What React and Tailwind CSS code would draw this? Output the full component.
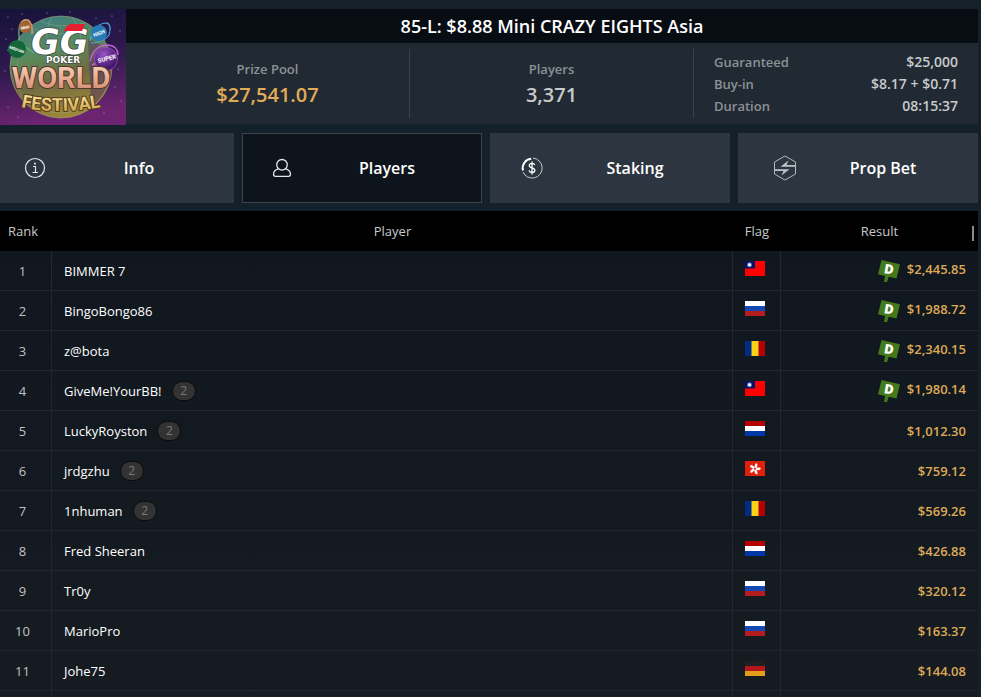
import React from "react";

const tabs = [
  { id: "info", label: "Info", Icon: InfoIcon, slot: "pl-7" },
  { id: "players", label: "Players", Icon: UserIcon, slot: "pl-[27px]" },
  { id: "staking", label: "Staking", Icon: StakingIcon, slot: "pl-[29px]" },
  { id: "prop-bet", label: "Prop Bet", Icon: PropBetIcon, slot: "pl-[34px]" },
];

const details = [
  { label: "Guaranteed", value: "$25,000" },
  { label: "Buy-in", value: "$8.17 + $0.71" },
  { label: "Duration", value: "08:15:37" },
];

const players = [
  { name: "BIMMER 7", flag: "tw", result: "$2,445.85", deal: true },
  { name: "BingoBongo86", flag: "ru", result: "$1,988.72", deal: true },
  { name: "z@bota", flag: "ro", result: "$2,340.15", deal: true },
  { name: "GiveMe!YourBB!", flag: "tw", result: "$1,980.14", deal: true, entries: 2 },
  { name: "LuckyRoyston", flag: "nl", result: "$1,012.30", entries: 2 },
  { name: "jrdgzhu", flag: "hk", result: "$759.12", entries: 2 },
  { name: "1nhuman", flag: "ro", result: "$569.26", entries: 2 },
  { name: "Fred Sheeran", flag: "nl", result: "$426.88" },
  { name: "Tr0y", flag: "ru", result: "$320.12" },
  { name: "MarioPro", flag: "ru", result: "$163.37" },
  { name: "Johe75", flag: "de", result: "$144.08" },
];

function InfoIcon() {
  return (
    <svg viewBox="0 0 24 24" className="w-6 h-6" fill="none" stroke="#e4e6e8" strokeWidth="1.2">
      <circle cx="12" cy="12" r="9.5" />
      <path d="M10 10.5h2.5v6M9.5 16.5h5.5" />
      <path d="M11 7.7h1.8" strokeWidth="1.8" />
    </svg>
  );
}

function UserIcon() {
  return (
    <svg viewBox="0 0 24 24" className="w-6 h-6" fill="none" stroke="#e4e6e8" strokeWidth="1.3">
      <circle cx="12" cy="8.8" r="5.3" />
      <path d="M8.3 12.8C5.2 13.8 3.5 15.5 3.5 18c0 1.600 .8 2.300 2 2.300h13c1.200 0 2-.7 2-2.300 0-2.500-1.700-4.200-4.800-5.200" />
    </svg>
  );
}

function StakingIcon() {
  return (
    <svg viewBox="0 0 24 24" className="w-6 h-6" fill="none" stroke="#d5d8db">
      <path d="M13 2.100a10 10 0 1 1-10 14" strokeWidth="0.9" />
      <path d="M11.200 2.800A9.300 9.300 0 0 0 3 14.500" stroke="#fff" strokeWidth="2" />
      <path
        d="M14.700 9.100c-.3-1.100-1.300-1.700-2.700-1.700-1.600 0-2.700.8-2.700 2.100 0 3.200 5.500 1.400 5.500 4.700 0 1.400-1.200 2.200-2.800 2.200s-2.700-.7-3-2M12 5.600v12.800"
        stroke="#fff"
        strokeWidth="1.300"
      />
    </svg>
  );
}

function PropBetIcon() {
  return (
    <svg viewBox="0 0 24 26" className="w-6 h-[26px]">
      <path d="M12 1 22.500 7v12L12 25 1.500 19V7z" fill="none" stroke="#b4b8bc" />
      <path d="M22.500 10v1.700H7.500L15.500 5.500 13.500 10z" fill="#c0c3c6" />
      <path d="M1.500 16v-1.700h15L8.500 20.500l2-4.500z" fill="#c0c3c6" />
    </svg>
  );
}

const stars = [
  [8, 8], [22, 5], [47, 4], [96, 9], [112, 7], [120, 22], [6, 30], [118, 60], [5, 62],
  [121, 92], [8, 98], [104, 104], [18, 108], [70, 3], [115, 78], [12, 20], [108, 14],
];

function EventLogo() {
  return (
    <svg viewBox="0 0 126 116" className="w-[126px] h-[116px] shrink-0" role="img" aria-label="GG Poker World Festival">
      <defs>
        <linearGradient id="sky" x1="0" y1="0" x2="0.200" y2="1">
          <stop offset="0" stopColor="#15133a" />
          <stop offset="0.550" stopColor="#311a50" />
          <stop offset="1" stopColor="#6c2470" />
        </linearGradient>
        <linearGradient id="globe" x1="0.300" y1="0" x2="0.600" y2="1">
          <stop offset="0" stopColor="#3d7d80" />
          <stop offset="0.350" stopColor="#5b8a5c" />
          <stop offset="0.600" stopColor="#6f6a42" />
          <stop offset="1" stopColor="#a08a38" />
        </linearGradient>
        <linearGradient id="rose" x1="0" y1="0" x2="0" y2="1">
          <stop offset="0" stopColor="#f9dcc4" />
          <stop offset="0.600" stopColor="#e2a58b" />
          <stop offset="1" stopColor="#c98268" />
        </linearGradient>
        <linearGradient id="gold" x1="0" y1="0" x2="0" y2="1">
          <stop offset="0" stopColor="#fff0b0" />
          <stop offset="1" stopColor="#cf9a3e" />
        </linearGradient>
        <radialGradient id="violet" cx="0.400" cy="0.300" r="0.700">
          <stop offset="0" stopColor="#9a55c4" />
          <stop offset="1" stopColor="#371060" />
        </radialGradient>
        <path id="curve" d="M21 98Q60 107 112 96" />
      </defs>
      <rect width="126" height="116" fill="url(#sky)" />
      {stars.map(([x, y]) => (
        <circle key={`${x}-${y}`} cx={x} cy={y} r="0.600" fill="#a9a3dc" />
      ))}
      <circle cx="61" cy="58" r="51" fill="url(#globe)" stroke="#a59a70" strokeWidth="0.600" />
      <path
        d="M40 12q20 9 45 2M34 20q26 10 56 0M52 8q-8 14-4 30M72 8q8 10 10 26M18 52q-4 20 4 36M40 100q20 8 42 0"
        stroke="#a0b898"
        strokeWidth="0.700"
        fill="none"
        opacity="0.500"
      />
      <path d="M88 30q20 4 23 34-6 24-20 34z" fill="#5a3c5c" opacity="0.600" />
      <path d="M8 42Q10 32 20 34L34 44M20 34Q16 12 26 11q6 2 7 14" fill="none" stroke="#60b57c" strokeWidth="1.300" />
      <path d="M20 20q1-11 8-9 5 3 4 14" fill="none" stroke="#d88b62" strokeWidth="1.600" />
      <path d="M90 52Q94 36 108 36q10 1 10 10M92 56l14-6" fill="none" stroke="#c264d8" strokeWidth="1.400" />
      <path d="M90 32q4-18 17-18 5 2 2 12-6 8-18 8" fill="none" stroke="#4ca7df" strokeWidth="1.200" />
      <circle cx="25" cy="18" r="6" fill="#a66332" />
      <circle cx="17" cy="40" r="9" fill="#136638" />
      <circle cx="99" cy="24" r="8" fill="#267bb4" />
      <circle cx="106" cy="50" r="11.500" fill="url(#violet)" stroke="#a64dc4" strokeWidth="0.800" />
      <g fill="#fff" fontFamily="Roboto, sans-serif" fontWeight="700" textAnchor="middle">
        <text x="25" y="20" fontSize="4" transform="rotate(-12 25 18)">MINI</text>
        <text x="17" y="42" fontSize="4" transform="rotate(20 17 40)">MEDIUM</text>
        <text x="99" y="26" fontSize="5" transform="rotate(-20 99 24)">HIGH</text>
        <text x="107" y="52" fontSize="6" transform="rotate(-14 106 50)">SUPER</text>
      </g>
      <g fontFamily="'DejaVu Sans', sans-serif" fontWeight="700" fill="#fff" paintOrder="stroke">
        <text x="31" y="45" fontSize="35" stroke="#3c4444" strokeWidth="1.500" fontStyle="italic">
          GG
        </text>
        <path d="M64 22q2-6 7-7h14l-3 7z" fill="#e3202b" />
        <text x="46" y="54" fontSize="9" stroke="#33393c" strokeWidth="1">
          POKER
        </text>
      </g>
      <g fontFamily="Roboto, sans-serif" fontWeight="700" strokeLinejoin="round" paintOrder="stroke">
        <text x="61" y="79" fontSize="29" textAnchor="middle" fill="url(#rose)" stroke="#55352b" strokeWidth="2">
          WORLD
        </text>
        <text fontSize="18" fill="url(#gold)" stroke="#4c381a" strokeWidth="2">
          <textPath href="#curve">FESTIVAL</textPath>
        </text>
      </g>
    </svg>
  );
}

function Flag({ code }) {
  const title = { tw: "Taiwan", ru: "Russia", ro: "Romania", nl: "Netherlands", hk: "Hong Kong", de: "Germany" };
  return (
    <svg viewBox="0 0 20 15" className="block w-5 h-[15px]" role="img" aria-label={title[code]}>
      {code === "tw" && (
        <>
          <rect width="20" height="15" fill="#fe0000" />
          <rect width="10" height="7.500" fill="#04106a" />
          <circle cx="4.500" cy="3.700" r="2.500" fill="#6474b0" />
          <circle cx="4.500" cy="3.700" r="1.500" fill="#fff" />
        </>
      )}
      {code === "ru" && (
        <>
          <rect width="20" height="5" fill="#fff" />
          <rect y="5" width="20" height="5" fill="#1549b4" />
          <rect y="10" width="20" height="5" fill="#b51c1c" />
        </>
      )}
      {code === "ro" && (
        <>
          <rect width="7" height="15" fill="#002b88" />
          <rect x="6.500" width="7.500" height="15" fill="#fbd116" />
          <rect x="13.500" width="6.500" height="15" fill="#b50000" />
        </>
      )}
      {code === "nl" && (
        <>
          <rect width="20" height="5" fill="#b50000" />
          <rect y="5" width="20" height="5" fill="#fff" />
          <rect y="10" width="20" height="5" fill="#0037a8" />
        </>
      )}
      {code === "hk" && (
        <>
          <rect width="20" height="15" fill="#e0200c" />
          {[10, 82, 154, 226, 298].map((angle) => (
            <ellipse key={angle} cx="10.500" cy="4.600" rx="1.300" ry="2.600" fill="#fff" transform={`rotate(${angle} 10 7.800)`} />
          ))}
          <circle cx="10" cy="7.800" r="0.700" fill="#e0200c" />
        </>
      )}
      {code === "de" && (
        <>
          <rect width="20" height="5" fill="#202020" />
          <rect y="5" width="20" height="5" fill="#b5171a" />
          <rect y="10" width="20" height="5" fill="#e0a01a" />
        </>
      )}
    </svg>
  );
}

function DealBadge() {
  return (
    <svg viewBox="0 0 22 22" className="w-[22px] h-[22px]" role="img" aria-label="Deal">
      <path d="M3.500 0 22 4.300 18.500 18.500 10.800 16.800 9 22H6l1-6L0 14.200z" fill="#437a1b" />
      <text x="11" y="14" textAnchor="middle" fontFamily="'Open Sans', sans-serif" fontWeight="800" fontSize="13" fill="#fff" transform="rotate(10 11 9)">
        D
      </text>
    </svg>
  );
}

function Stat({ label, value, valueClass }) {
  return (
    <div className="my-1.5 pt-0.5 border-r border-[#3a434c] flex flex-col items-center justify-center font-semibold">
      <span className="text-[13px] leading-5 text-[#8c9196]">{label}</span>
      <span className={`text-xl leading-8 ${valueClass}`}>{value}</span>
    </div>
  );
}

export default function App() {
  return (
    <div className="h-screen overflow-hidden flex flex-col bg-[#14202a] pt-[9px] pr-[3px] font-['Open_Sans',sans-serif] text-white">
      <header className="flex">
        <EventLogo />
        <div className="flex-1 flex flex-col mb-px">
          <h1 className="h-[34px] flex items-center justify-center bg-[#080d14] text-lg font-semibold">
            85-L: $8.88 Mini CRAZY EIGHTS Asia
          </h1>
          <div className="flex-1 grid grid-cols-3 bg-[#212a33]">
            <Stat label="Prize Pool" value="$27,541.07" valueClass="text-[#e0ac57]" />
            <Stat label="Players" value="3,371" valueClass="text-[#c8cacc]" />
            <dl className="px-5 flex flex-col justify-center text-[13px] leading-[22px] font-semibold">
              {details.map((item) => (
                <div key={item.label} className="flex justify-between">
                  <dt className="text-[#8c9196]">{item.label}</dt>
                  <dd className="text-sm leading-[22px] text-[#c8cacc]">{item.value}</dd>
                </div>
              ))}
            </dl>
          </div>
        </div>
      </header>

      <nav className="-ml-1.5 mt-2 grid grid-cols-4 gap-2">
        {tabs.map(({ id, label, Icon, slot }) => (
          <button
            key={id}
            type="button"
            aria-pressed={id === "players"}
            className={`h-[70px] flex items-center border text-base font-semibold ${
              id === "players" ? "bg-[#0e141b] border-[#3b4349]" : "bg-[#2d3640] border-[#2d3640]"
            }`}
          >
            <span className={`w-[60px] shrink-0 ${slot}`}>
              <Icon />
            </span>
            <span className="flex-1 pr-2.5">{label}</span>
          </button>
        ))}
      </nav>

      <div className="-ml-1.5 mt-2 flex-1 min-h-0 overflow-hidden">
        <table className="w-full table-fixed border-separate border-spacing-0 text-[13px] leading-5">
          <colgroup>
            <col className="w-[58px]" />
            <col />
            <col className="w-12" />
            <col className="w-[197px]" />
          </colgroup>
          <thead>
            <tr className="h-10 bg-black text-[#c8cacc]">
              <th className="p-0 font-normal">Rank</th>
              <th className="p-0 font-normal">Player</th>
              <th className="p-0 font-normal">Flag</th>
              <th className="p-0 font-normal">
                <div className="flex items-center pl-1.5 pr-1">
                  <span className="flex-1">Result</span>
                  <span className="w-0.5 h-[15px] mt-1 bg-[#8a8a8a]" />
                </div>
              </th>
            </tr>
          </thead>
          <tbody className="bg-linear-to-b from-[#10171e] to-[#161c22]">
            {players.map((player, index) => (
              <tr key={player.name} className="h-10">
                <td className="p-0 border-b border-r border-[#20272e] text-center text-[#c0c3c5]">{index + 1}</td>
                <td className="py-0 px-3 border-b border-r border-[#20272e]">
                  <div className="flex items-center gap-2.5">
                    {player.name}
                    {player.entries && (
                      <span className="w-6 h-5 flex items-center justify-center rounded-full border border-[#090b0d] bg-[#333333] text-xs text-[#75787a]">
                        {player.entries}
                      </span>
                    )}
                  </div>
                </td>
                <td className="pt-2.5 pb-0 px-3 border-b border-r border-[#20272e] align-top">
                  <Flag code={player.flag} />
                </td>
                <td className="py-0 pr-3 pl-0 border-b border-[#20272e] font-semibold text-[#dda957]">
                  {player.deal ? (
                    <div className="flex items-start justify-end gap-[7px]">
                      <DealBadge />
                      <span className="leading-[18px]">{player.result}</span>
                    </div>
                  ) : (
                    <div className="text-right">{player.result}</div>
                  )}
                </td>
              </tr>
            ))}
            <tr className="h-10">
              <td className="border-r border-[#20272e]" />
              <td className="border-r border-[#20272e]" />
              <td className="border-r border-[#20272e]" />
              <td />
            </tr>
          </tbody>
        </table>
      </div>
    </div>
  );
}
